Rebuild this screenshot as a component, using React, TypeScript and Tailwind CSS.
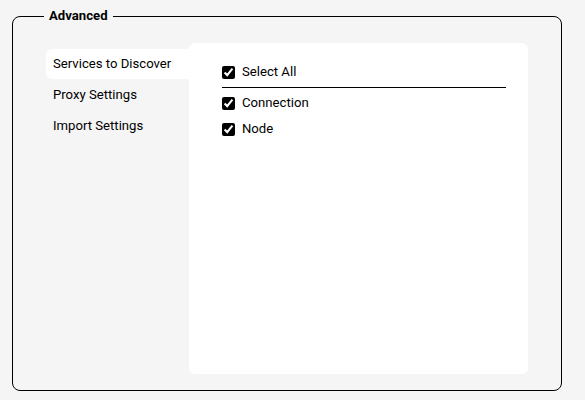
import React from "react";

export default function App() {
  const items = ["Connection", "Node"];
  return (
    <div
      className="w-[585px] h-[400px] bg-[#f5f5f5] pt-2 pl-3 text-black text-[13.15px]"
      style={{ fontFamily: "Roboto, 'Liberation Sans', sans-serif" }}
    >
      <fieldset className="w-[550px] h-[383px] border border-black rounded-lg pl-[33px] pr-[33px] pt-[19px] pb-[16px]">
        <legend className="-ml-[2px] px-[5px] font-bold leading-4">Advanced</legend>
        <div className="flex h-full">
          <div className="w-[143px] pt-[6px] flex flex-col">
            <div className="h-[30px] flex items-center px-[7px] bg-white rounded-l-md">Services to Discover</div>
            <div className="h-[31px] flex items-center px-[7px]">Proxy Settings</div>
            <div className="h-[31px] flex items-center px-[7px]">Import Settings</div>
          </div>
          <div className="flex-1 bg-white rounded-md pl-[33px] pr-[22px] pt-[22px]">
            <label className="flex items-center gap-[7px] h-[14px]">
              <input type="checkbox" defaultChecked className="accent-black w-[13px] h-[13px]" />
              <span>Select All</span>
            </label>
            <div className="mt-[8px] border-t border-black" />
            <div className="flex flex-col gap-[12px] pt-[8px]">
              {items.map((t) => (
                <label key={t} className="flex items-center gap-[7px] h-[14px]">
                  <input type="checkbox" defaultChecked className="accent-black w-[13px] h-[13px]" />
                  <span>{t}</span>
                </label>
              ))}
            </div>
          </div>
        </div>
      </fieldset>
    </div>
  );
}
